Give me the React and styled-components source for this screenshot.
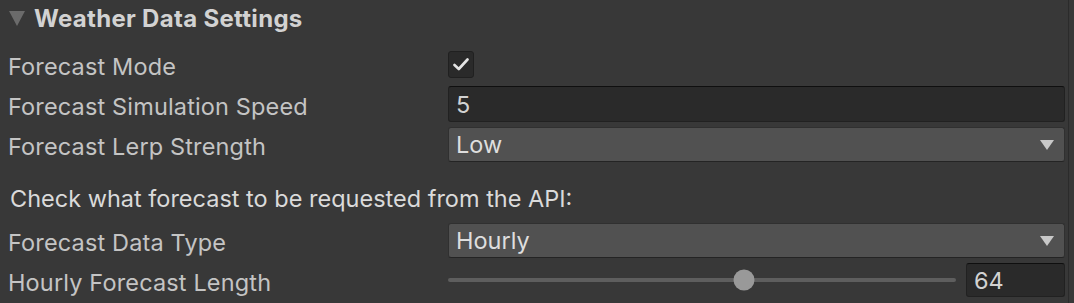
import React from "react";
import styled, { createGlobalStyle } from "styled-components";

const GlobalStyle = createGlobalStyle`
  html, body {
    margin: 0;
    padding: 0;
    background: #383838;
  }
  body {
    font-family: Inter, "Noto Sans", sans-serif;
    -webkit-font-smoothing: antialiased;
  }
`;

const Panel = styled.div`
  width: 1069px;
  height: 303px;
  box-sizing: border-box;
  border-right: 1px solid #2b2b2b;
  padding: 0 3px 0 8px;
  display: flex;
  flex-direction: column;
  gap: 4px;
  overflow: hidden;
`;

const Foldout = styled.div`
  height: 42px;
  box-sizing: border-box;
  padding-bottom: 5px;
  display: flex;
  align-items: center;
  gap: 9px;
  font-size: 24px;
  font-weight: 700;
  letter-spacing: 0.3px;
  color: #d2d2d2;
`;

const Arrow = styled.span`
  width: 0;
  height: 0;
  margin-left: 1px;
  border-left: 8px solid transparent;
  border-right: 8px solid transparent;
  border-top: 15px solid #6b6b6b;
`;

const Row = styled.div`
  height: 36px;
  display: grid;
  grid-template-columns: 440px 1fr;
  align-items: center;
`;

const Label = styled.span`
  padding-top: 4px;
  font-size: 23.5px;
  letter-spacing: 0.15px;
  color: #c4c4c4;
  white-space: nowrap;
`;

const Help = styled.div`
  height: 52px;
  padding-top: 12px;
  box-sizing: border-box;
  display: flex;
  align-items: center;
  padding-left: 2px;
  font-size: 23.5px;
  color: #dadada;
`;

const Toggle = styled.div`
  width: 26px;
  height: 27px;
  box-sizing: border-box;
  border-radius: 3px;
  background: #2a2a2a;
  border: 1px solid #202020;
  display: flex;
  align-items: center;
  justify-content: center;
`;

const Field = styled.div`
  height: ${(p) => p.$h || 36}px;
  box-sizing: border-box;
  border-radius: 3px;
  background: #2a2a2a;
  border: 1px solid #212121;
  border-top-color: #0f0f0f;
  padding-left: 7px;
  display: flex;
  align-items: center;
  font-size: 23.5px;
  color: #d2d2d2;
`;

const Popup = styled.div`
  align-self: end;
  height: 35px;
  box-sizing: border-box;
  border-radius: 3px;
  background: #515151;
  border: 1px solid #303030;
  border-bottom-color: #242424;
  padding: 0 10px 0 7px;
  display: flex;
  align-items: center;
  justify-content: space-between;
  font-size: 23.5px;
  color: #dedede;
`;

const Caret = styled.span`
  width: 0;
  height: 0;
  border-left: 7.5px solid transparent;
  border-right: 7.5px solid transparent;
  border-top: 10px solid #c8c8c8;
`;

const SliderWrap = styled.div`
  display: grid;
  grid-template-columns: 1fr 99px;
  gap: 10px;
  align-items: center;
`;

const Track = styled.div`
  position: relative;
  height: 4px;
  border-radius: 2px;
  background: #5e5e5e;
`;

const Thumb = styled.span`
  position: absolute;
  top: 50%;
  width: 21px;
  height: 21px;
  border-radius: 50%;
  background: #999999;
  transform: translate(-50%, -50%);
`;

const Dropdown = ({ value }) => (
  <Popup>
    {value}
    <Caret />
  </Popup>
);

const Slider = ({ value, min, max }) => {
  const pct = ((value - min) / (max - min)) * 100;
  return (
    <SliderWrap>
      <Track>
        <Thumb style={{ left: `${pct}%` }} />
      </Track>
      <Field $h={34}>{value}</Field>
    </SliderWrap>
  );
};

export default function App() {
  return (
    <>
      <GlobalStyle />
      <Panel>
        <Foldout>
          <Arrow />
          Weather Data Settings
        </Foldout>
        <Row>
          <Label>Forecast Mode</Label>
          <Toggle>
            <svg width="16" height="13" viewBox="0 0 16 13">
              <path d="M1.5 7 L5.8 11 L14.5 1.5" fill="none" stroke="#e4e4e4" strokeWidth="2.6" strokeLinecap="round" strokeLinejoin="round" />
            </svg>
          </Toggle>
        </Row>
        <Row>
          <Label>Forecast Simulation Speed</Label>
          <Field>5</Field>
        </Row>
        <Row>
          <Label>Forecast Lerp Strength</Label>
          <Dropdown value="Low" />
        </Row>
        <Help>Check what forecast to be requested from the API:</Help>
        <Row>
          <Label>Forecast Data Type</Label>
          <Dropdown value="Hourly" />
        </Row>
        <Row>
          <Label>Hourly Forecast Length</Label>
          <Slider value={64} min={1} max={109} />
        </Row>
      </Panel>
    </>
  );
}
